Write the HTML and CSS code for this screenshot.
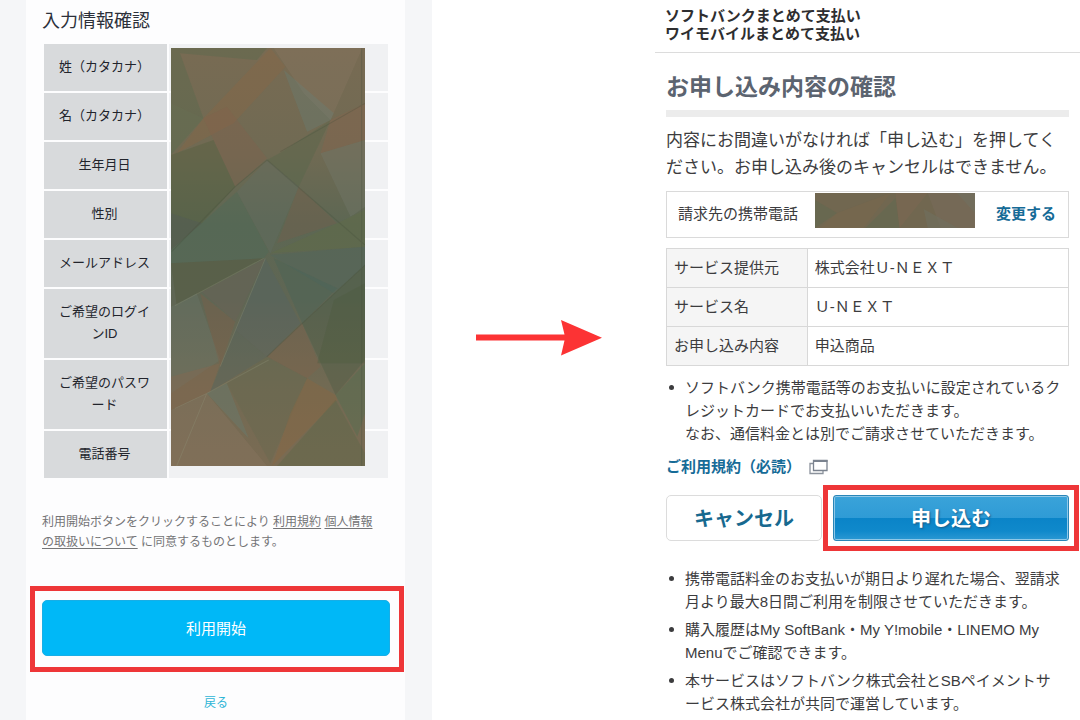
FILE: index.html
```html
<!DOCTYPE html>
<html lang="ja">
<head>
<meta charset="utf-8">
<meta name="viewport" content="width=device-width, initial-scale=1">
<title>お申し込み内容の確認</title>
<link rel="stylesheet" href="styles.css">
</head>
<body>
<main class="steps">
  <section class="signup">
    <div class="signup-card">
      <h1 class="signup-title">入力情報確認</h1>
      <div class="info">
        <table class="info-table">
          <tr><th scope="row">姓（カタカナ）</th><td></td></tr>
          <tr><th scope="row">名（カタカナ）</th><td></td></tr>
          <tr><th scope="row">生年月日</th><td></td></tr>
          <tr><th scope="row">性別</th><td></td></tr>
          <tr><th scope="row">メールアドレス</th><td></td></tr>
          <tr><th scope="row">ご希望のログインID</th><td></td></tr>
          <tr><th scope="row">ご希望のパスワード</th><td></td></tr>
          <tr><th scope="row">電話番号</th><td></td></tr>
        </table>
        <svg class="mask" viewBox="33 24 580 1254" preserveAspectRatio="none" aria-hidden="true">
          <defs>
            <linearGradient id="base" x1="0" y1="0" x2="0" y2="1">
              <stop offset="0" stop-color="#786b53"/>
              <stop offset=".25" stop-color="#706a53"/>
              <stop offset=".42" stop-color="#5d6753"/>
              <stop offset=".6" stop-color="#5f6654"/>
              <stop offset=".8" stop-color="#716a53"/>
              <stop offset="1" stop-color="#7a6b53"/>
            </linearGradient>
          </defs>
          <rect x="33" y="24" width="580" height="1254" fill="url(#base)"/>
          <g fill-opacity=".34">
            <path fill="#52694d" d="M33 24H320L290 60 60 40zM33 24 60 40 130 235 33 190z"/>
            <path fill="#51704f" d="M33 190 130 235 33 345z"/>
            <path fill="#8d6842" d="M330 24 375 80 220 250 50 340 130 235z"/>
            <path fill="#8b7964" d="M340 24H605L510 240 430 160z"/>
            <path fill="#83624c" d="M130 235 200 200 320 355 225 440z"/>
            <path fill="#688078" d="M370 90 520 220 510 240 440 275z"/>
            <path fill="#8d634c" d="M613 190V300L480 340 510 240z"/>
            <path fill="#767a70" d="M480 340 613 300V500L570 530z"/>
            <path fill="#52674a" d="M365 335 510 240 415 440 320 360z"/>
            <path fill="#4e5d3c" d="M33 345 160 300 225 440 125 550 33 520z"/>
            <path fill="#465349" d="M33 520 125 550 33 630z"/>
            <path fill="#496b5b" d="M125 550 230 455 325 635zM125 550 325 635 310 655 33 670V630z"/>
            <path fill="#627066" d="M320 360 415 440 330 640 230 455z"/>
            <path fill="#775d4d" d="M415 440 530 550 350 610z"/>
            <path fill="#606e42" d="M530 550 613 510V620L330 640z"/>
            <path fill="#4d6761" d="M330 645 613 620V675L520 760z"/>
            <path fill="#426457" d="M340 655 530 745 425 850z"/>
            <path fill="#505638" d="M33 670 310 655 50 795z"/>
            <path fill="#6d6058" d="M125 755 315 655 225 845z"/>
            <path fill="#69796d" d="M33 800 110 760 180 960 33 1060z"/>
            <path fill="#805f47" d="M120 760 225 845 180 980z"/>
            <path fill="#516366" d="M315 655 225 870 320 950 420 850z"/>
            <path fill="#506460" d="M225 870 320 950 150 1055z"/>
            <path fill="#846048" d="M425 850 480 980 440 1015 320 950z"/>
            <path fill="#465c42" d="M613 675V960L525 1065 425 850z"/>
            <path fill="#4d5c3d" d="M520 780 613 730V970L470 970z"/>
            <path fill="#8d674d" d="M33 1010 180 970 150 1055 33 1110z"/>
            <path fill="#8d7963" d="M33 1110 140 1060 60 1278H33zM140 1060 320 1278H60z"/>
            <path fill="#648079" d="M140 1060 200 1030 265 1195z"/>
            <path fill="#64694e" d="M200 1030 320 950 440 1015 330 1270z"/>
            <path fill="#91663d" d="M440 1015 525 1065 530 1080 335 1278 390 1120z"/>
            <path fill="#49704e" d="M525 1065 613 970V1120L590 1190z"/>
            <path fill="#556747" d="M525 1080 613 1240V1278H350z"/>
          </g>
          <g fill="none" stroke-width="3" stroke-opacity=".3">
            <path stroke="#92957a" d="M45 797 310 655M45 1105 140 1060 325 960M140 1060 50 1278M180 980 315 655"/>
            <path stroke="#474e3b" d="M360 335 613 190M35 635 225 440 320 360M320 360 613 615M320 950 425 850 613 675M603 24V1278"/>
          </g>
        </svg>
      </div>
      <p class="consent">利用開始ボタンをクリックすることにより <a href="#terms">利用規約</a> <a href="#privacy">個人情報の取扱いについて</a> に同意するものとします。</p>
      <div class="start-wrap"><button class="start" type="button">利用開始</button></div>
      <a class="back" href="#back">戻る</a>
    </div>
  </section>

  <div class="next">
    <svg class="arrow" viewBox="0 0 126 36" role="img" aria-label="次へ">
      <path fill="#fc3334" d="M0 14.5H88.500L85 0 126 17.800 85 35.500 88.500 20.500H0z"/>
    </svg>
  </div>

  <section class="payment">
    <header class="brand">ソフトバンクまとめて支払い<br>ワイモバイルまとめて支払い</header>
    <div class="payment-body">
      <h2 class="payment-title">お申し込み内容の確認</h2>
      <p class="lead">内容にお間違いがなければ「申し込む」を押してください。お申し込み後のキャンセルはできません。</p>
      <div class="phone">
        <span>請求先の携帯電話</span>
        <svg class="phone-mask" viewBox="0 0 159 35" preserveAspectRatio="none" aria-hidden="true">
          <rect width="159" height="35" fill="#716750"/>
          <g fill-opacity=".5">
            <path fill="#5f6a50" d="M0 7 22 20 0 35zM50 35 80 5 84 35z"/>
            <path fill="#7e6751" d="M80 0H112L84 35z"/>
            <path fill="#7a6c5b" d="M112 0H159V35H125z"/>
            <path fill="#6f7162" d="M108 16 142 35H112zM141 0H159V20z"/>
            <path fill="#79674c" d="M22 20 75 0 48 35H5z"/>
          </g>
        </svg>
        <a class="change" href="#change">変更する</a>
      </div>
      <table class="service">
        <tr><th scope="row">サービス提供元</th><td>株式会社Ｕ-ＮＥＸＴ</td></tr>
        <tr><th scope="row">サービス名</th><td>Ｕ-ＮＥＸＴ</td></tr>
        <tr><th scope="row">お申し込み内容</th><td>申込商品</td></tr>
      </table>
      <ul class="notes">
        <li>ソフトバンク携帯電話等のお支払いに設定されているクレジットカードでお支払いいただきます。<br>なお、通信料金とは別でご請求させていただきます。</li>
      </ul>
      <a class="terms" href="#rules">ご利用規約（必読）
        <svg class="window-icon" viewBox="0 0 19 16" aria-hidden="true">
          <path fill="none" stroke="#8b929c" stroke-width="1.300" d="M4 4.500H1V14.500H14V12"/>
          <path fill="#fff" stroke="#7b838f" stroke-width="1.300" d="M4.500 1.500H18V11.500H4.500z"/>
          <path stroke="#7b838f" stroke-width="2" d="M4 2H18.500"/>
        </svg>
      </a>
      <div class="actions">
        <button class="cancel" type="button">キャンセル</button>
        <div class="apply-wrap"><button class="apply" type="button">申し込む</button></div>
      </div>
      <ul class="notes">
        <li>携帯電話料金のお支払いが期日より遅れた場合、翌請求月より最大8日間ご利用を制限させていただきます。</li>
        <li>購入履歴はMy SoftBank・My Y!mobile・LINEMO My Menuでご確認できます。</li>
        <li>本サービスはソフトバンク株式会社とSBペイメントサービス株式会社が共同で運営しています。</li>
      </ul>
    </div>
  </section>
</main>
</body>
</html>
```
FILE: styles.css
```css
* { box-sizing: border-box; }

body {
  margin: 0;
  background: #fff;
  color: #3c3c3e;
  font-family: "Liberation Sans", "Noto Sans CJK JP", sans-serif;
  font-size: 15px;
}

h1, h2, p, ul { margin: 0; }
button { font-family: inherit; cursor: pointer; }

.steps {
  display: grid;
  grid-template-columns: 432fr 223fr 425fr;
  min-height: 100vh;
}

/* Sign-up confirmation */
.signup {
  background: #f5f6f8;
  padding: 0 27px 0 26px;
}

.signup-card {
  min-height: 100%;
  padding: 8px 15px 0 16px;
  background: #fdfdfe;
  display: flex;
  flex-direction: column;
}

.signup-title {
  color: #2c303a;
  font-size: 18px;
  font-weight: 400;
  line-height: 27px;
}

.info {
  position: relative;
  margin-top: 7px;
}

.info-table {
  width: 100%;
  border-collapse: separate;
  border-spacing: 2px;
  table-layout: fixed;
}

.info-table th {
  width: 123px;
  padding: 12px 15px 13px 13px;
  background: #d8dadc;
  color: #22242c;
  font-size: 13px;
  font-weight: 400;
  line-height: 22px;
}

.info-table td {
  padding: 0;
  background: #f0f1f3;
}

.mask {
  position: absolute;
  top: 6px;
  left: 129px;
  width: calc(100% - 154px);
  height: calc(100% - 20px);
}

.consent {
  margin-top: 32px;
  padding-right: 8px;
  color: #747476;
  font-size: 12px;
  line-height: 20px;
}

.consent a {
  color: inherit;
  text-underline-offset: 2px;
}

.start-wrap {
  position: relative;
  margin-top: 48px;
}

.start-wrap::after,
.apply-wrap::after {
  content: "";
  position: absolute;
  border: 5px solid #ee3638;
  pointer-events: none;
}

.start-wrap::after { inset: -14px -14px -16px -12px; }

.start {
  display: block;
  width: 100%;
  height: 56px;
  padding: 0 0 2px;
  border: 1px solid #18aee6;
  border-radius: 5px;
  background: #00b8f7;
  color: #fff;
  font-size: 15px;
}

.back {
  align-self: center;
  margin-top: 37px;
  color: #2fb5d6;
  font-size: 12px;
  line-height: 20px;
  text-decoration: none;
}

/* Arrow between the two screens */
.next { padding: 320px 53px 0 44px; }

.arrow {
  display: block;
  width: 100%;
}

/* Carrier payment confirmation */
.brand {
  padding: 7px 10px 9px;
  border-bottom: 1px solid #dcdcdc;
  color: #2e2e30;
  font-weight: 700;
  line-height: 18px;
}

.payment-body { padding: 17px 11px 0; }

.payment-title {
  padding-bottom: 6px;
  border-bottom: 7px solid #ececec;
  color: #5c6470;
  font-size: 23px;
  line-height: 34px;
}

.lead {
  margin-top: 10px;
  font-size: 17px;
  line-height: 27px;
}

.phone {
  display: flex;
  align-items: center;
  min-height: 47px;
  margin-top: 10px;
  padding: 0 12px 2px 11px;
  border: 1px solid #dadada;
  line-height: 22px;
}

.phone-mask {
  flex: 1;
  align-self: flex-start;
  height: 35px;
  margin: 1px 21px 0 17px;
  min-width: 0;
}

.change, .terms {
  color: #166b97;
  font-weight: 700;
  text-decoration: none;
}

.service {
  width: 100%;
  margin-top: 10px;
  border-collapse: collapse;
  line-height: 22px;
}

.service th, .service td {
  padding: 8px 7px;
  border: 1px solid #d8d8d8;
  font-weight: 400;
  text-align: left;
}

.service th {
  width: 35%;
  background: #f5f5f5;
}

.notes {
  display: grid;
  gap: 5px;
  margin-top: 10px;
  padding: 0 8px 0 19px;
  line-height: 23px;
  list-style: none;
}

.notes li { position: relative; }

.notes li::before {
  content: "";
  position: absolute;
  top: 9px;
  left: -16px;
  width: 5px;
  height: 5px;
  border-radius: 50%;
  background: #3c3c3e;
}

.terms {
  display: flex;
  align-items: center;
  gap: 8px;
  margin-top: 10px;
  line-height: 23px;
}

.window-icon {
  width: 19px;
  height: 16px;
}

.actions {
  display: grid;
  grid-template-columns: 156fr 236fr;
  gap: 11px;
  margin-top: 17px;
}

.cancel, .apply {
  width: 100%;
  height: 46px;
  padding: 0 0 2px;
  border-radius: 5px;
  font-size: 20px;
  font-weight: 700;
}

.cancel {
  border: 1px solid #dcdcdc;
  background: #fff;
  color: #17698f;
}

.apply-wrap { position: relative; }
.apply-wrap::after { inset: -10px; }

.apply {
  display: block;
  border: 1px solid #2a86b8;
  border-radius: 3px;
  background: linear-gradient(#3aa3d9, #2f9bd6 50%, #0a84c8 50%, #1089cb 80%, #2b98d3);
  box-shadow: inset 0 0 0 1px #8fc8e8;
  color: #fff;
  text-shadow: 1px 1px 2px #1a5c86;
}

.actions + .notes { margin-top: 26px; }
```
